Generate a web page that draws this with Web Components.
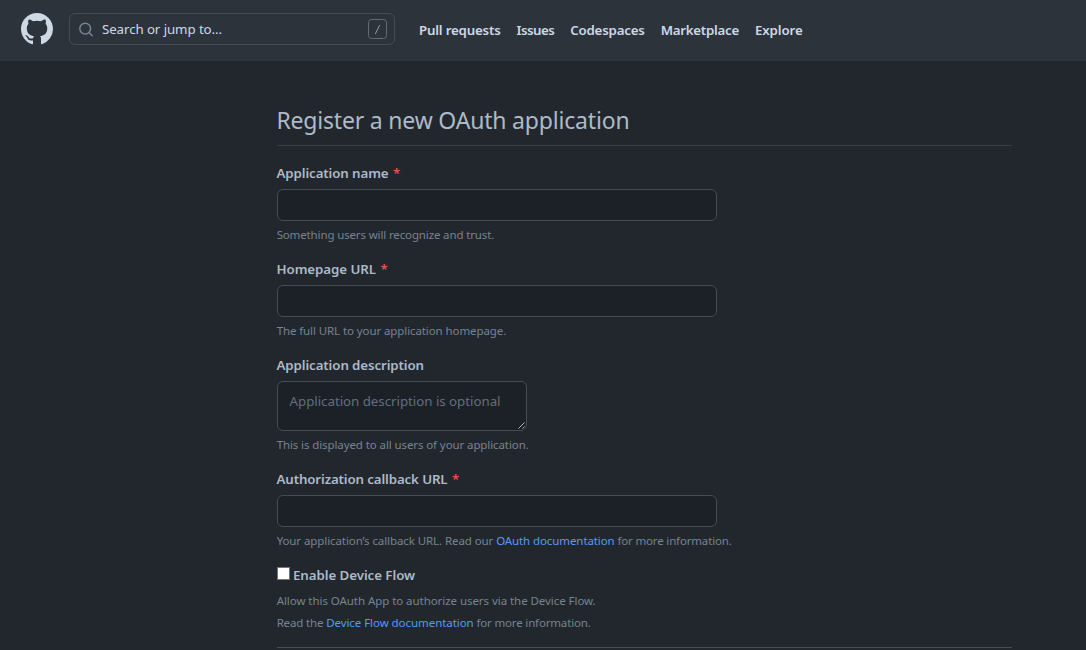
<!DOCTYPE html>
<html lang="en">
<head>
<meta charset="utf-8">
<title>Register a new OAuth application</title>
<style>
body{margin:0;height:650px;overflow:hidden;background:#22272e;color:#adbac7;font:13.3px/21px "Noto Sans","Open Sans",sans-serif}
</style>
</head>
<body>
<oauth-page></oauth-page>
<script>
const define = (name, html, setup) => {
  const t = document.createElement('template');
  t.innerHTML = html;
  customElements.define(name, class extends HTMLElement {
    connectedCallback() {
      if (this.shadowRoot) return;
      this.attachShadow({ mode: 'open' }).append(t.content.cloneNode(true));
      if (setup) setup(this, this.shadowRoot);
    }
  });
};

// Single-line text tracked to a given measure (the "w" attribute, in px).
define('fit-text', `<style>:host{display:inline-block;white-space:pre}</style><slot></slot>`, host => {
  const w = +host.getAttribute('w');
  const r = document.createRange();
  r.selectNodeContents(host);
  const natural = r.getBoundingClientRect().width;
  host.style.letterSpacing = ((w - natural) / host.textContent.length).toFixed(4) + 'px';
  host.style.width = w + 'px';
});

define('github-mark', `<style>:host{display:block;width:32px;height:32px;color:#cdd9e5}svg{display:block}</style>
<svg width="32" height="32" viewBox="0 0 16 16" fill="currentColor"><path fill-rule="evenodd" d="M8 0C3.58 0 0 3.58 0 8c0 3.54 2.29 6.53 5.47 7.59.4.07.55-.17.55-.38 0-.19-.01-.82-.01-1.49-2.01.37-2.53-.49-2.69-.94-.09-.23-.48-.94-.82-1.13-.28-.15-.68-.52-.01-.53.63-.01 1.08.58 1.23.82.72 1.21 1.87.87 2.33.66.07-.52.28-.87.51-1.07-1.78-.2-3.64-.89-3.64-3.95 0-.87.31-1.59.82-2.15-.08-.2-.36-1.02.08-2.12 0 0 .67-.21 2.2.82.64-.18 1.32-.27 2-.27.68 0 1.36.09 2 .27 1.53-1.04 2.2-.82 2.2-.82.44 1.1.16 1.92.08 2.12.51.56.82 1.27.82 2.15 0 3.07-1.87 3.75-3.65 3.95.29.25.54.73.54 1.48 0 1.07-.01 1.93-.01 2.2 0 .21.15.46.55.38A8.013 8.013 0 0016 8c0-4.42-3.58-8-8-8z"/></svg>`);

define('search-box', `<style>
:host{display:flex;align-items:center;box-sizing:border-box;width:326px;height:32px;margin-left:16px;padding:0 7px 0 8px;border:1px solid #444c56;border-radius:6px;color:#cdd9e5}
svg{display:block;flex:none}
.t{margin-left:8px;flex:1}
</style>
<svg width="16" height="16" viewBox="0 0 16 16" fill="none" stroke="#768390" stroke-width="1.5" stroke-linecap="round"><circle cx="7.2" cy="7.6" r="5.4"/><path d="M11.3 11.7l2.9 2.9"/></svg>
<span class="t"><fit-text w="120">Search or jump to...</fit-text></span>
<svg width="19" height="20" viewBox="0 0 19 20" fill="none"><rect x=".5" y=".5" width="18" height="19" rx="3" stroke="#626b76"/><path d="M11.7 6L7.3 15" stroke="#909aa5"/></svg>`);

define('nav-link', `<style>:host{display:block;font-weight:600;color:#cdd9e5}</style><slot></slot>`);

define('app-header', `<style>
:host{display:flex;align-items:center;box-sizing:border-box;height:61px;padding:0 21px 3px;background:#2d333b}
nav{display:flex;gap:16px;margin:2px 0 0 24px}
</style>
<github-mark></github-mark><search-box></search-box>
<nav><nav-link><fit-text w="81.5">Pull requests</fit-text></nav-link><nav-link><fit-text w="37.7">Issues</fit-text></nav-link><nav-link><fit-text w="74.5">Codespaces</fit-text></nav-link><nav-link><fit-text w="78.2">Marketplace</fit-text></nav-link><nav-link><fit-text w="47.7">Explore</fit-text></nav-link></nav>`);

define('help-note', `<style>:host{display:block;font-size:11.5px;line-height:18px;color:#768390;white-space:nowrap;text-indent:-.2px}</style><slot></slot>`);

define('doc-link', `<style>:host{display:inline;color:#539bf5}</style><slot></slot>`);

define('form-field', `<style>
:host{display:block;margin-bottom:15px}
.label{display:flex;height:21px;font-weight:600;margin-bottom:5px;text-indent:-.5px}
.star{display:none;color:#e5534b;margin-left:4.5px}
:host([required]) .star{display:block}
.box{box-sizing:border-box;width:440px;height:32px;border:1px solid #444c56;border-radius:6px;background:#1c2128;margin-bottom:5px}
:host([multiline]) .box{width:250px;height:50px;display:flex;justify-content:space-between;padding:9px 0 0 12px;color:#636e7b;text-indent:-.5px}
svg{display:none}
:host([multiline]) svg{display:block;align-self:flex-end}
.note{display:block;height:18px}
</style>
<div class="label"><slot name="label"></slot><span class="star">*</span></div>
<div class="box"><slot name="hint"></slot><svg width="8" height="8" viewBox="0 0 8 8" stroke="#c3c7cc" stroke-width=".9"><path d="M.5 6.5l6-6M4.5 6.5l2-2"/></svg></div>
<div class="note"><slot name="note"></slot></div>`);

define('device-flow', `<style>
:host{display:block}
.row{display:flex;height:21px;font-weight:600}
.check{box-sizing:border-box;width:13px;height:13px;margin:2px 3px 0 0;border:1px solid #767676;background:#fff}
.notes{display:grid;gap:4px;margin-top:6px}
</style>
<div class="row"><span class="check"></span><slot name="label"></slot></div>
<div class="notes"><slot></slot></div>`);

define('oauth-page', `<style>
main{width:735px;margin:45px 0 0 277px}
h1{box-sizing:border-box;height:40px;margin:0 0 17px;border-bottom:1px solid #373e47;font-size:23px;line-height:29px;font-weight:400;text-indent:-.3px}
hr{margin:15px 0 0;border:0;height:1px;background:#444c56}
</style>
<app-header></app-header>
<main>
<h1><fit-text w="353">Register a new OAuth application</fit-text></h1>
<form-field required><fit-text slot="label" w="112">Application name</fit-text><help-note slot="note"><fit-text w="217.5">Something users will recognize and trust.</fit-text></help-note></form-field>
<form-field required><fit-text slot="label" w="99.5">Homepage URL</fit-text><help-note slot="note"><fit-text w="229.5">The full URL to your application homepage.</fit-text></help-note></form-field>
<form-field multiline><fit-text slot="label" w="147.5">Application description</fit-text><fit-text slot="hint" w="211">Application description is optional</fit-text><help-note slot="note"><fit-text w="252">This is displayed to all users of your application.</fit-text></help-note></form-field>
<form-field required><fit-text slot="label" w="171">Authorization callback URL</fit-text><help-note slot="note"><fit-text w="219.5">Your application’s callback URL. Read our </fit-text><doc-link><fit-text w="118.5">OAuth documentation</fit-text></doc-link><fit-text w="117"> for more information.</fit-text></help-note></form-field>
<device-flow><fit-text slot="label" w="122">Enable Device Flow</fit-text>
<help-note><fit-text w="319">Allow this OAuth App to authorize users via the Device Flow.</fit-text></help-note>
<help-note><fit-text w="49.5">Read the </fit-text><doc-link><fit-text w="147.5">Device Flow documentation</fit-text></doc-link><fit-text w="117"> for more information.</fit-text></help-note></device-flow>
<hr>
</main>`);
</script>
</body>
</html>
